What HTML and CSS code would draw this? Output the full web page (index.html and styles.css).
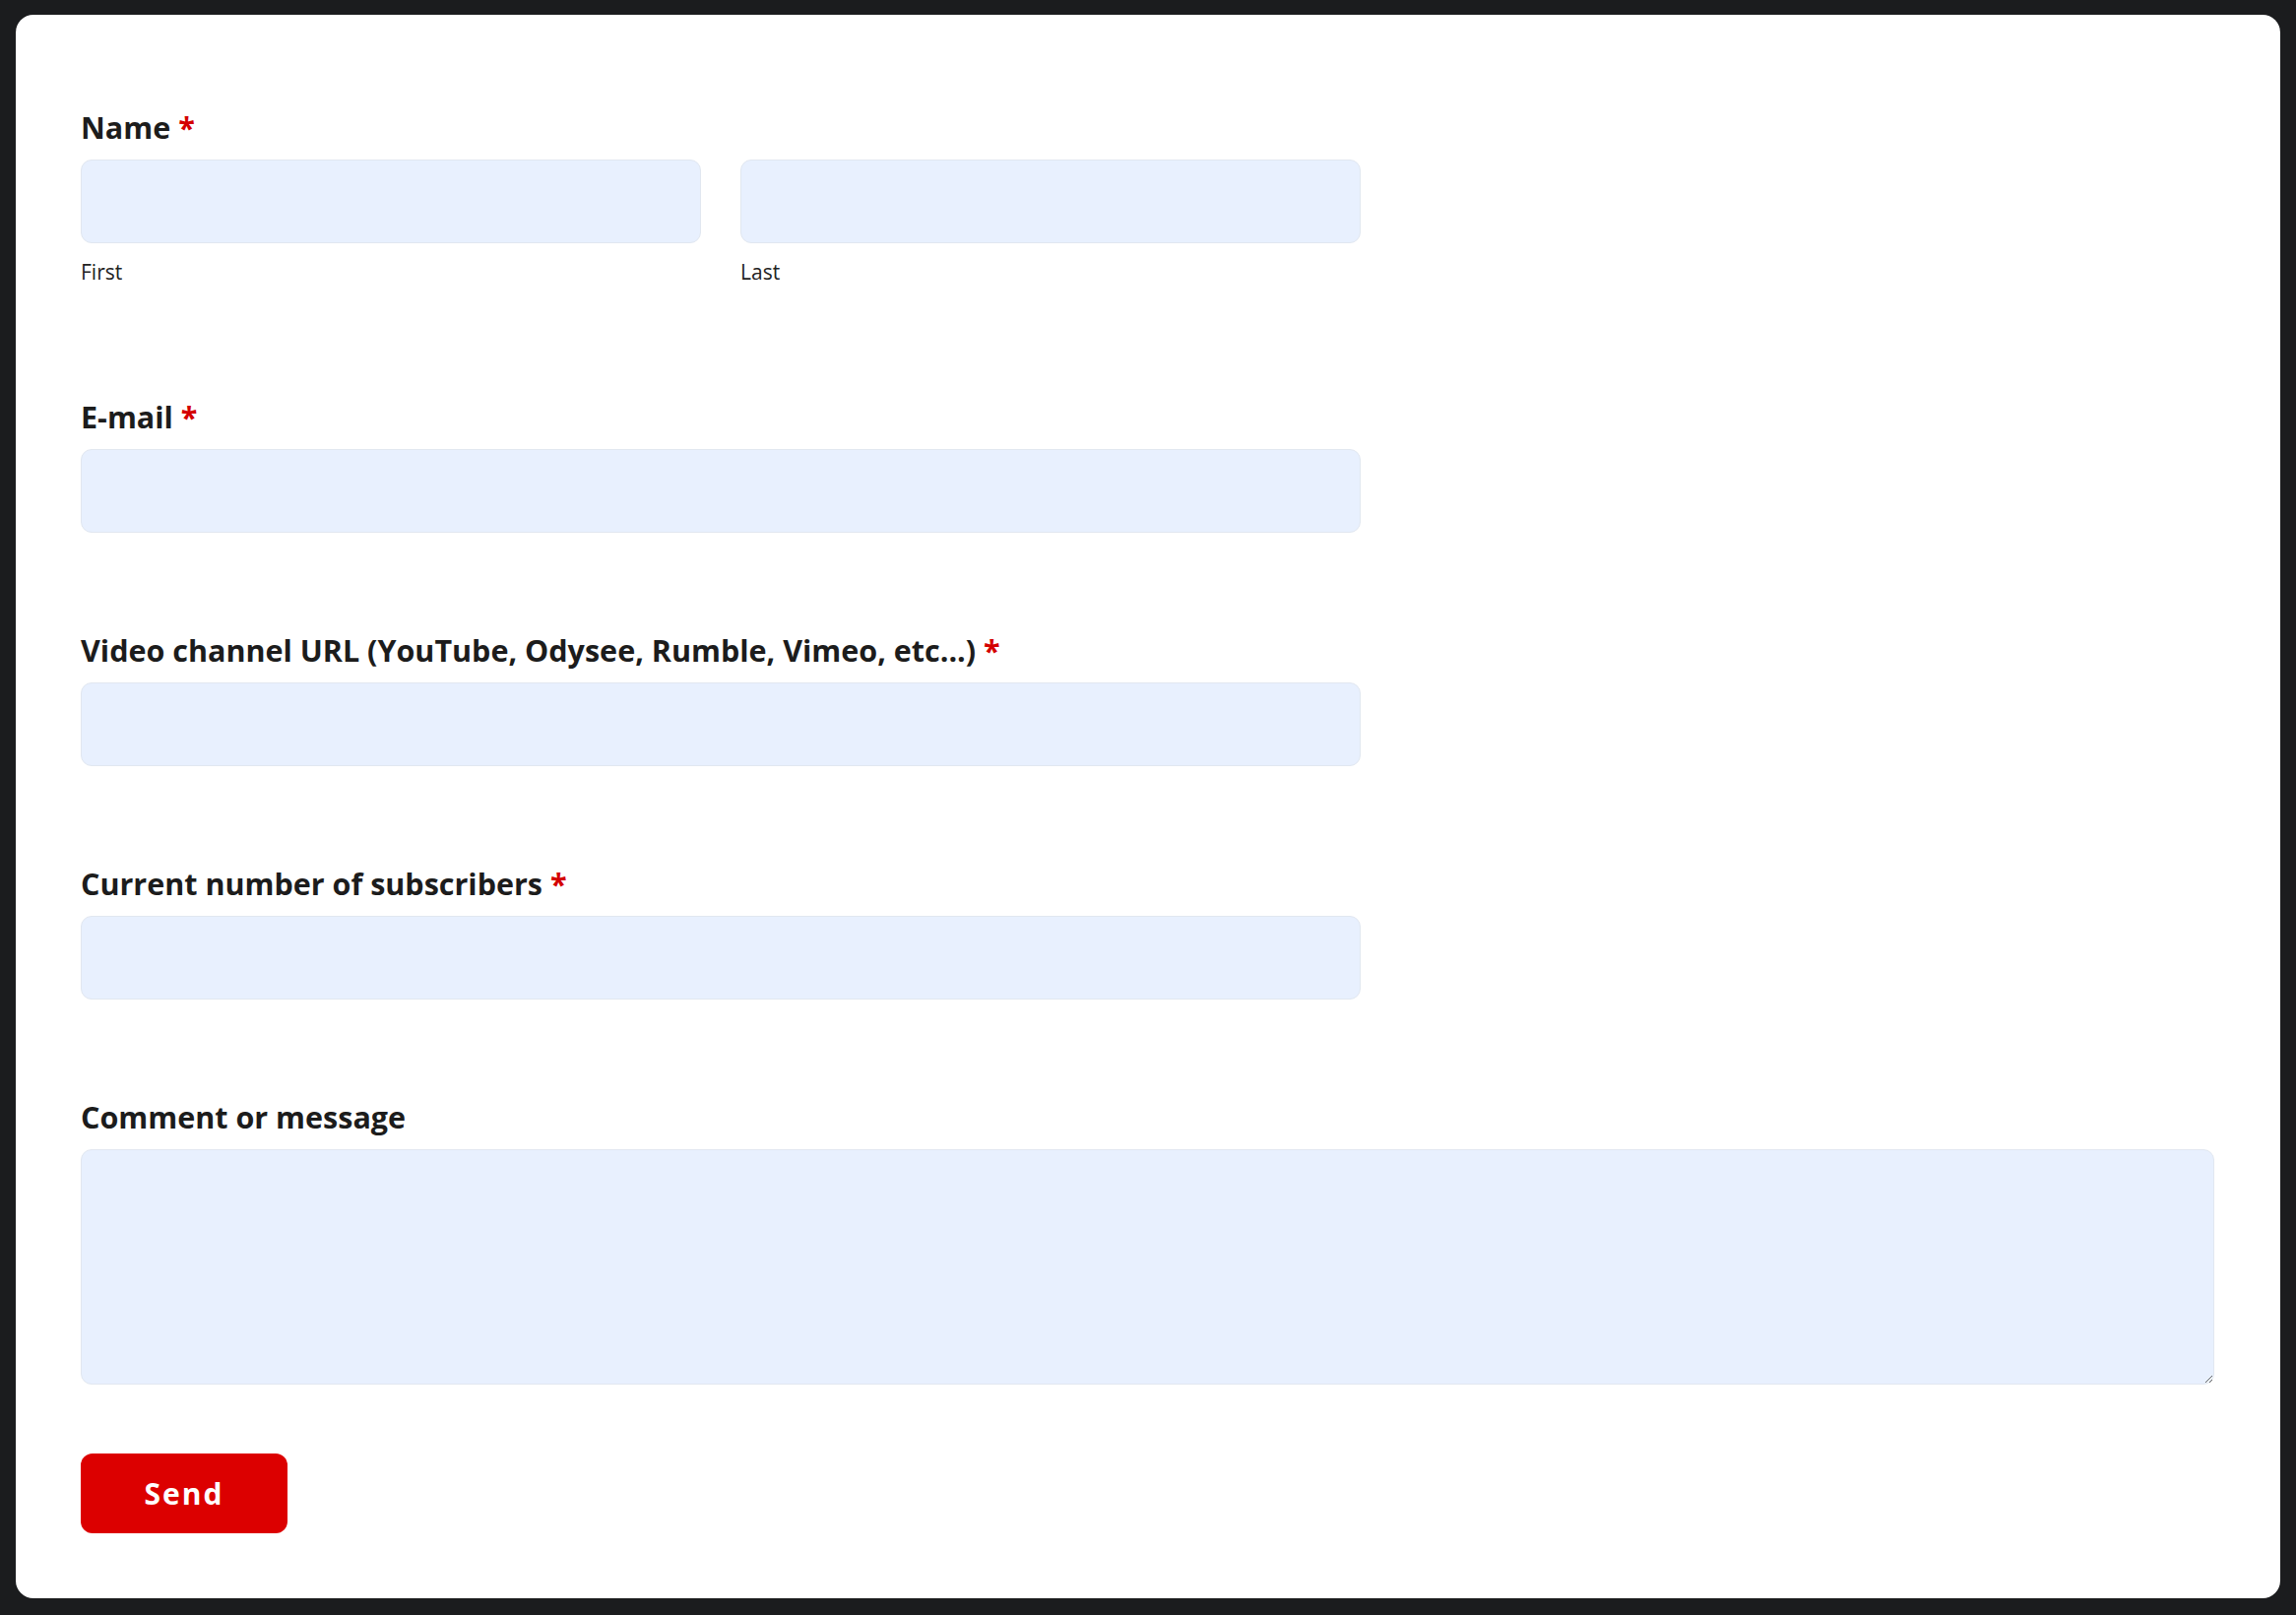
FILE: index.html
```html
<!DOCTYPE html>
<html lang="en">
<head>
    <meta charset="UTF-8">
    <title>Creator Application</title>
    <link rel="stylesheet" href="styles.css">
</head>
<body>
    <form class="card" id="applyForm">
        <div class="field">
            <label class="field-label">Name <span class="req">*</span></label>
            <div class="name-row">
                <div class="name-part">
                    <input type="text" id="firstName" name="first" class="text-input">
                    <span class="sub-label">First</span>
                </div>
                <div class="name-part">
                    <input type="text" id="lastName" name="last" class="text-input">
                    <span class="sub-label">Last</span>
                </div>
            </div>
        </div>

        <div class="field">
            <label class="field-label" for="email">E-mail <span class="req">*</span></label>
            <input type="email" id="email" name="email" class="text-input narrow">
        </div>

        <div class="field">
            <label class="field-label" for="channel">Video channel URL (YouTube, Odysee, Rumble, Vimeo, etc...) <span class="req">*</span></label>
            <input type="text" id="channel" name="channel" class="text-input narrow">
        </div>

        <div class="field">
            <label class="field-label" for="subs">Current number of subscribers <span class="req">*</span></label>
            <input type="text" id="subs" name="subs" class="text-input narrow">
        </div>

        <div class="field last">
            <label class="field-label" for="message">Comment or message</label>
            <textarea id="message" name="message" class="text-input message"></textarea>
        </div>

        <button type="submit" class="send-button">Send</button>
    </form>
</body>
</html>
```

FILE: styles.css
```css
body {
    margin: 0;
    padding: 15px 16px 16px;
    background: #1b1c1e;
    font-family: 'Open Sans', sans-serif;
    color: #1c1c1c;
}

.card {
    display: flex;
    flex-direction: column;
    align-items: flex-start;
    background: #fff;
    border-radius: 18px;
    padding: 96px 67px 66px 66px;
}

.field {
    width: 100%;
    display: flex;
    flex-direction: column;
    margin-bottom: 101px;
}

.field.last {
    margin-bottom: 70px;
}

.field-label {
    font-size: 30.5px;
    font-weight: 700;
    line-height: 37px;
    margin-bottom: 14px;
    color: #1c1c1c;
}

.req {
    color: #d40000;
}

.name-row {
    display: flex;
    gap: 40px;
    width: 60%;
}

.name-part {
    flex: 1;
    display: flex;
    flex-direction: column;
}

.sub-label {
    font-size: 21px;
    line-height: 28px;
    margin-top: 15px;
    margin-bottom: 14px;
    color: #222;
}

.text-input {
    box-sizing: border-box;
    height: 85px;
    width: 100%;
    background: #e8f0fe;
    border: 1px solid #e1e7f0;
    border-radius: 11px;
    font-family: inherit;
    font-size: 22px;
    padding: 0 20px;
    outline: none;
}

.text-input.narrow {
    width: 60%;
}

.text-input.message {
    height: 239px;
    padding: 18px 20px;
    resize: vertical;
}

.send-button {
    width: 210px;
    height: 81px;
    background: #dc0000;
    color: #fff;
    border: none;
    border-radius: 12px;
    font-family: inherit;
    font-size: 30px;
    font-weight: 700;
    letter-spacing: 2px;
    cursor: pointer;
}

.send-button:hover {
    background: #b80000;
}
```
